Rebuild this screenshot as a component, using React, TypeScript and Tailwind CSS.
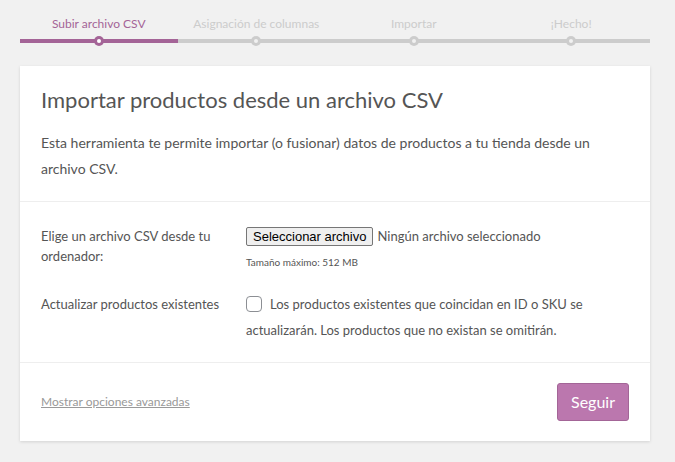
import { ReactNode } from "react";

interface StepProps {
  label: string;
  done: boolean;
}

const steps: StepProps[] = [
  { label: "Subir archivo CSV", done: true },
  { label: "Asignación de columnas", done: false },
  { label: "Importar", done: false },
  { label: "¡Hecho!", done: false },
];

const font = "font-['Lato','Liberation_Sans',sans-serif]";

const Steps = () => (
  <ol className="ml-[20px] mr-[25px] flex pt-[15px]">
    {steps.map(({ label, done }) => (
      <li key={label} className="flex flex-1 flex-col items-center">
        <span
          className={`text-[12px] leading-[18px] ${done ? "text-[#a46497]" : "text-[#cccccc]"}`}
        >
          {label}
        </span>
        <div className={`relative mt-[6px] h-[4px] w-full ${done ? "bg-[#a46497]" : "bg-[#cccccc]"}`}>
          <span
            className={`absolute left-1/2 top-1/2 flex h-[10px] w-[10px] -translate-x-1/2 -translate-y-1/2 items-center justify-center rounded-full ${
              done ? "bg-[#a46497]" : "bg-[#cccccc]"
            }`}
          >
            <span className={`h-[4px] w-[4px] rounded-full ${done ? "bg-white" : "bg-[#f1f1f1]"}`} />
          </span>
        </div>
      </li>
    ))}
  </ol>
);

const Row = ({ label, labelClass = "", children }: { label: string; labelClass?: string; children: ReactNode }) => (
  <div className="flex">
    <div className={`w-[205px] shrink-0 pr-[16px] text-[13px] leading-[20px] text-[#555] ${labelClass}`}>{label}</div>
    <div className="flex-1">{children}</div>
  </div>
);

export default function App() {
  return (
    <div className={`min-h-[462px] bg-[#f1f1f1] ${font}`}>
      <Steps />
      <div className="ml-[20px] mr-[25px] mt-[23px] bg-white shadow-[0_1px_3px_rgba(0,0,0,0.13)]">
        <header className="border-b border-[#eeeeee] px-[21px] pb-[19px] pt-[20px]">
          <h1 className="text-[22px] leading-[28px] font-normal text-[#555]">
            Importar productos desde un archivo CSV
          </h1>
          <p className="mt-[16px] text-[14px] leading-[26px] text-[#555]">
            Esta herramienta te permite importar (o fusionar) datos de productos a tu tienda desde un archivo CSV.
          </p>
        </header>

        <section className="flex flex-col gap-[22px] border-b border-[#eeeeee] px-[21px] pb-[19px] pt-[24px]">
          <Row label="Elige un archivo CSV desde tu ordenador:">
            <div className="flex items-center gap-[4px] text-[13px] leading-[20px] text-[#555]">
              <button className="rounded-[2px] border border-[#767676] bg-[#efefef] px-[6px] text-[13px] leading-[17px] text-black font-['Liberation_Sans',sans-serif]">
                Seleccionar archivo
              </button>
              <span>Ningún archivo seleccionado</span>
            </div>
            <div className="mt-[9px] text-[10px] leading-[14px] text-[#555]">Tamaño máximo: 512 MB</div>
          </Row>
          <Row label="Actualizar productos existentes" labelClass="pt-[3px]">
            <label className="block text-[13px] leading-[26px] text-[#555]">
              <span className="mr-[8px] inline-block h-[16px] w-[16px] rounded-[4px] border border-[#8c8f94] bg-white align-[-3px]" />
              Los productos existentes que coincidan en ID o SKU se actualizarán. Los productos que no existan se
              omitirán.
            </label>
          </Row>
        </section>

        <footer className="flex items-center justify-between px-[21px] py-[20px]">
          <a href="#" className="text-[12px] text-[#999] underline">
            Mostrar opciones avanzadas
          </a>
          <button className="h-[38px] rounded-[3px] border border-[#a36597] bg-[#bb77ae] px-[13px] text-[16px] text-white">
            Seguir
          </button>
        </footer>
      </div>
    </div>
  );
}
